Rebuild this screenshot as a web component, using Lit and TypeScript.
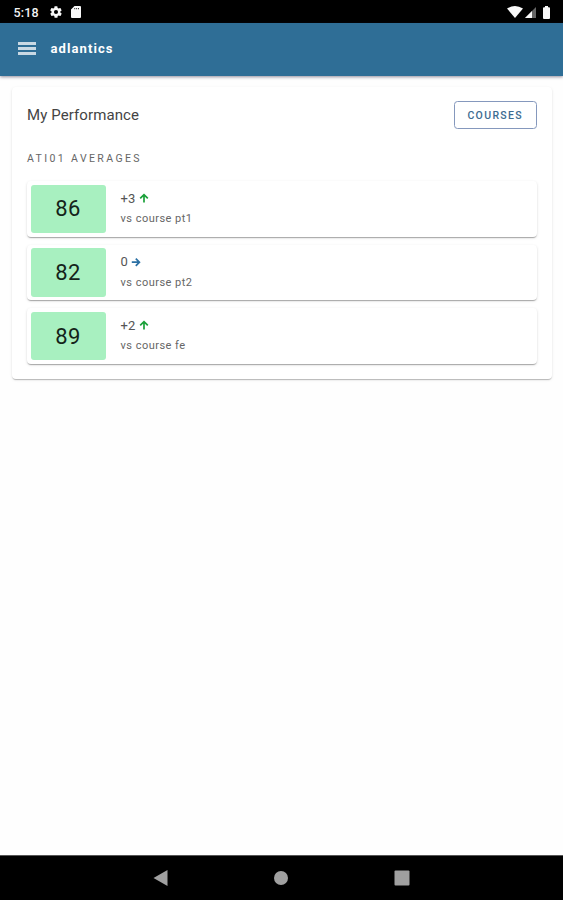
import { LitElement, html, css } from "lit";
import { customElement, property } from "lit/decorators.js";

type Trend = "up" | "flat";

const arrows: Record<Trend, string> = {
  up: "M5 9.5V1.8M1.2 5.4L5 1.6l3.8 3.8",
  flat: "M.8 5.2h7.6M4.8 1.6l3.6 3.6-3.6 3.6",
};

@customElement("score-row")
class ScoreRow extends LitElement {
  @property() score = "";
  @property() delta = "";
  @property() trend: Trend = "up";
  @property() label = "";

  static styles = css`
    :host {
      box-sizing: border-box;
      display: flex;
      height: 55.7px;
      padding: 3.5px;
      gap: 15px;
      border-radius: 4px;
      background: #fff;
      box-shadow: 0 2px 1px -1px rgba(0, 0, 0, 0.18), 0 1px 1px rgba(0, 0, 0, 0.13), 0 1px 3px rgba(0, 0, 0, 0.12);
    }
    .score {
      display: flex;
      align-items: center;
      justify-content: center;
      width: 75px;
      height: 48.5px;
      border-radius: 3px;
      background: #a8f0c0;
      color: #14241a;
      font-size: 22px;
      letter-spacing: 0.3px;
    }
    .detail {
      display: flex;
      flex-direction: column;
      padding-top: 4.5px;
    }
    .delta {
      display: flex;
      align-items: center;
      gap: 3.5px;
      height: 18px;
      color: #555;
      font-size: 13px;
    }
    .label {
      height: 24px;
      line-height: 24.8px;
      font-size: 11px;
      letter-spacing: 0.48px;
      color: #666;
    }
    svg {
      width: 10px;
      height: 10px;
      fill: none;
      stroke-width: 1.7;
    }
    .up { stroke: #1ba13a; }
    .flat { stroke: #2b70a4; }
  `;

  render() {
    return html`
      <div class="score">${this.score}</div>
      <div class="detail">
        <div class="delta">
          <span>${this.delta}</span>
          <svg class=${this.trend} viewBox="0 0 10 10"><path d=${arrows[this.trend]} /></svg>
        </div>
        <div class="label">${this.label}</div>
      </div>
    `;
  }
}

@customElement("app-root")
class AppRoot extends LitElement {
  static styles = css`
    :host {
      display: flex;
      flex-direction: column;
      height: 900px;
      overflow: hidden;
      background: #fefefe;
      font-family: Roboto, "Liberation Sans", sans-serif;
    }
    .status {
      box-sizing: border-box;
      display: flex;
      align-items: center;
      height: 23px;
      padding: 1px 13px 0 13.5px;
      background: #000;
      color: #f4f4f4;
      font-size: 12.5px;
      font-weight: 500;
      letter-spacing: 0.2px;
    }
    .time { width: 35.5px; }
    .status svg { display: block; fill: #f8f8f8; }
    .gear { margin-right: 8px; }
    .signals {
      display: flex;
      align-items: center;
      margin-left: auto;
    }
    .signal { margin: 0 7px 0 2px; }
    .bar {
      box-sizing: border-box;
      display: flex;
      align-items: center;
      height: 52.5px;
      padding: 0 18px 1px;
      gap: 14.5px;
      background: #2f6e96;
      color: #fff;
      font-size: 13px;
      font-weight: 700;
      letter-spacing: 1.1px;
      box-shadow: 0 1px 3px rgba(40, 30, 60, 0.5);
    }
    .menu {
      display: flex;
      flex-direction: column;
      gap: 2px;
    }
    .menu i {
      width: 18px;
      height: 3px;
      background: #c9d9e4;
    }
    main { flex: 1; padding: 11.5px 11.5px 0 12px; }
    .card {
      box-sizing: border-box;
      height: 291.5px;
      padding: 14px 15px 0 15px;
      border-radius: 4px;
      background: #fff;
      box-shadow: 0 2px 1px -1px rgba(0, 0, 0, 0.14), 0 1px 1px rgba(0, 0, 0, 0.1), 0 1px 3px rgba(0, 0, 0, 0.1);
    }
    .head {
      display: flex;
      align-items: center;
      justify-content: space-between;
      height: 28px;
      color: #444;
      font-size: 15px;
      letter-spacing: 0.1px;
    }
    .courses {
      box-sizing: border-box;
      width: 82.5px;
      height: 28px;
      padding: 0;
      border: 1px solid #8598bd;
      border-radius: 3.5px;
      background: #fff;
      color: #3d6c91;
      font: 500 10.5px Roboto, "Liberation Sans", sans-serif;
      letter-spacing: 1.35px;
    }
    .section {
      height: 52px;
      line-height: 59px;
      color: #666;
      font-size: 10.5px;
      letter-spacing: 2.4px;
    }
    .rows {
      display: flex;
      flex-direction: column;
      gap: 8px;
    }
    .nav {
      box-sizing: border-box;
      display: flex;
      align-items: center;
      height: 45px;
      padding: 0 0 1px 152.500px;
      gap: 104.500px;
      border-top: 1px solid #555;
      background: #000;
    }
    .nav svg { width: 16px; height: 16px; fill: #a0a0a0; }
  `;

  render() {
    return html`
      <div class="status">
        <span class="time">5:18</span>
        <svg class="gear" width="14" height="14" viewBox="0 0 24 24">
          <path fill-rule="evenodd" d="M19.4 13c.1-.6.1-1.4 0-2l2.1-1.6a.5.5 0 0 0 .1-.6l-2-3.5a.5.5 0 0 0-.6-.2l-2.5 1a7 7 0 0 0-1.7-1l-.4-2.7a.5.5 0 0 0-.5-.4h-4a.5.5 0 0 0-.5.4L9 5.1a7 7 0 0 0-1.7 1l-2.5-1a.5.5 0 0 0-.6.2l-2 3.500a.5.5 0 0 0 .1.6L4.500 11a8 8 0 0 0 0 2l-2.100 1.600a.5.5 0 0 0-.1.6l2 3.500c.1.2.4.3.6.2l2.500-1a7 7 0 0 0 1.700 1l.4 2.700c0 .2.2.4.5.4h4c.3 0 .5-.2.5-.4l.4-2.700a7 7 0 0 0 1.700-1l2.500 1c.2.1.5 0 .6-.2l2-3.500a.5.5 0 0 0-.1-.6zM12 15.500a3.500 3.500 0 1 1 0-7 3.500 3.500 0 0 1 0 7z" />
        </svg>
        <svg width="10" height="12" viewBox="0 0 10 12">
          <path fill-rule="evenodd" d="M3.500 0H9a1 1 0 0 1 1 1v10a1 1 0 0 1-1 1H1a1 1 0 0 1-1-1V3.500zM3.400 1.900v1.300h.8v-1.300zm1.900 0v1.300h.8v-1.300zm1.900 0v1.300h.8v-1.300z" />
        </svg>
        <div class="signals">
          <svg width="16" height="12" viewBox="0 0 16 12"><path d="M0 2.500Q8-2.500 16 2.500L8 12z" /></svg>
          <svg class="signal" width="11" height="11" viewBox="0 0 11 11">
            <path fill="#666" d="M11 0v11H0z" /><path d="M7 4v7H0z" />
          </svg>
          <svg width="7" height="13" viewBox="0 0 7 13"><path d="M2 0h3v1.300h1a1 1 0 0 1 1 1V12a1 1 0 0 1-1 1H1a1 1 0 0 1-1-1V2.300a1 1 0 0 1 1-1h1z" /></svg>
        </div>
      </div>
      <header class="bar">
        <div class="menu"><i></i><i></i><i></i></div>
        <span>adlantics</span>
      </header>
      <main>
        <section class="card">
          <div class="head">
            <span>My Performance</span>
            <button class="courses">COURSES</button>
          </div>
          <div class="section">ATI01 AVERAGES</div>
          <div class="rows">
            <score-row score="86" delta="+3" trend="up" label="vs course pt1"></score-row>
            <score-row score="82" delta="0" trend="flat" label="vs course pt2"></score-row>
            <score-row score="89" delta="+2" trend="up" label="vs course fe"></score-row>
          </div>
        </section>
      </main>
      <nav class="nav">
        <svg viewBox="0 0 16 16"><path d="M14.500 0v16L0.500 8z" /></svg>
        <svg viewBox="0 0 16 16"><circle cx="8" cy="8" r="7" /></svg>
        <svg viewBox="0 0 16 16"><rect x=".5" y=".5" width="15" height="15" rx="1" /></svg>
      </nav>
    `;
  }
}
